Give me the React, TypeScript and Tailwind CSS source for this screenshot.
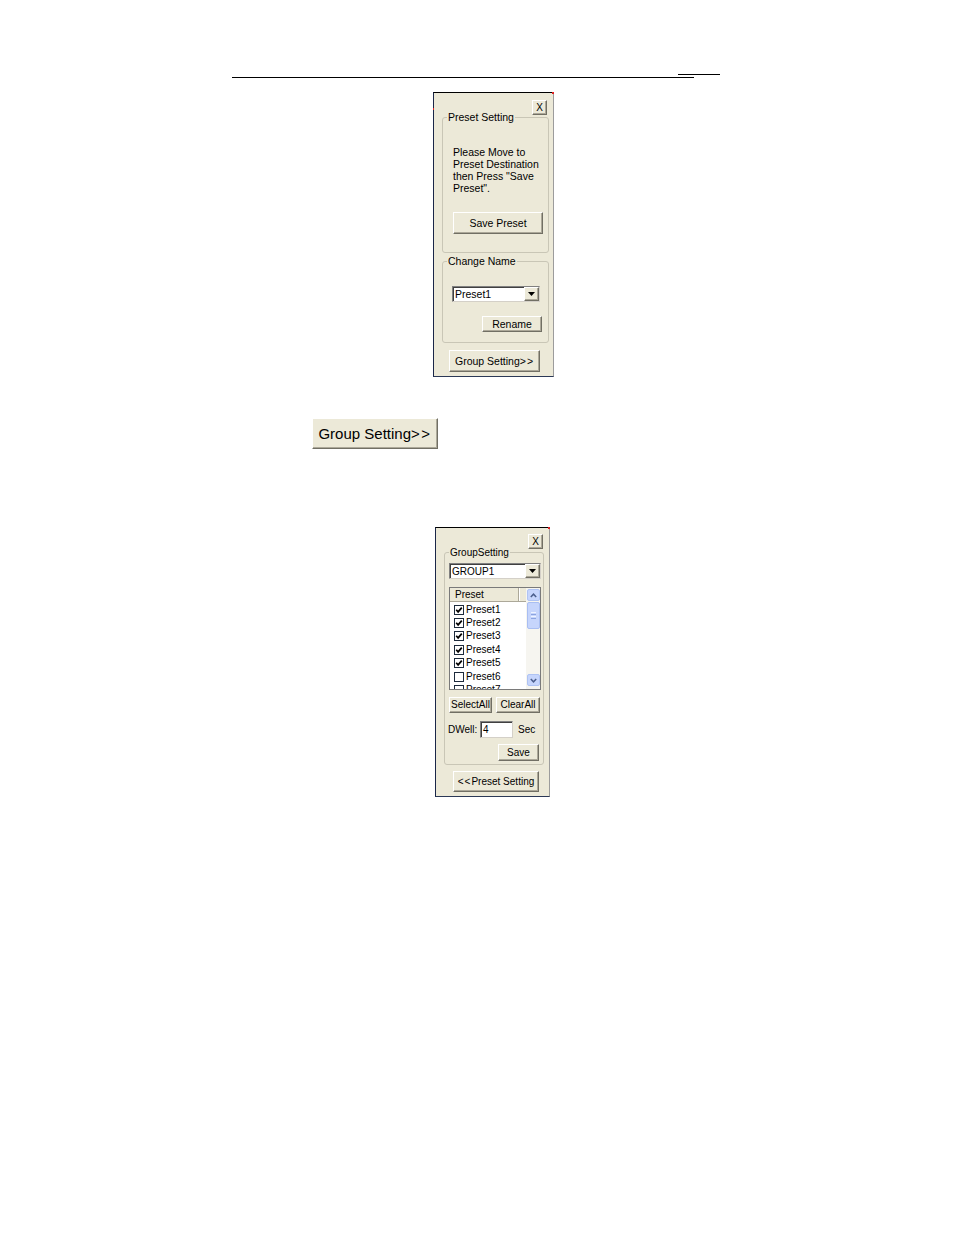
import React from "react";

const btn3d =
  "box-border shrink-0 flex items-center justify-center bg-[#ECE9D8] border border-t-white border-l-white border-r-[#716F64] border-b-[#716F64] shadow-[inset_-1px_-1px_0_#ACA899] text-black leading-none whitespace-nowrap";

function GroupBox({
  title,
  className,
  children,
}: {
  title: string;
  className: string;
  children: React.ReactNode;
}) {
  return (
    <div className={`relative box-border shrink-0 border border-[#C9C6B6] rounded-[3px] ${className}`}>
      <span className="absolute -top-[7px] left-[4px] px-[1px] bg-[#ECE9D8] leading-[13px] whitespace-nowrap text-black">
        {title}
      </span>
      {children}
    </div>
  );
}

function Combo({ value, className }: { value: string; className: string }) {
  return (
    <div
      className={`box-border shrink-0 flex bg-white border border-t-[#808080] border-l-[#808080] border-r-[#D4D0C8] border-b-[#D4D0C8] shadow-[inset_1px_1px_0_#404040] ${className}`}
    >
      <span className="flex-1 pl-[2px] pt-[1px] leading-[13px] whitespace-nowrap text-black">{value}</span>
      <div className={`${btn3d} w-[15px] h-[14px] mt-0`}>
        <svg width="7" height="4" viewBox="0 0 7 4">
          <path d="M0 0h7L3.5 4z" fill="#000" />
        </svg>
      </div>
    </div>
  );
}

function Check({ checked }: { checked: boolean }) {
  return (
    <div className="box-border w-[10px] h-[10px] border border-[#1c2a3c] bg-white flex items-center justify-center shrink-0">
      {checked && (
        <svg width="8" height="8" viewBox="0 0 8 8">
          <path d="M1.2 3.8 L3.1 5.9 L6.8 1.6" stroke="#000" strokeWidth="1.7" fill="none" />
        </svg>
      )}
    </div>
  );
}

function ScrollBtn({ dir }: { dir: "up" | "down" }) {
  return (
    <div className="box-border w-[13px] h-[12px] rounded-[2px] bg-[#C6D5FC] border border-[#AFC3F3] flex items-center justify-center shrink-0">
      <svg width="7" height="5" viewBox="0 0 7 5">
        {dir === "up" ? (
          <path d="M0.8 4 L3.5 1.2 L6.2 4" stroke="#4B5E8C" strokeWidth="1.5" fill="none" />
        ) : (
          <path d="M0.8 1 L3.5 3.8 L6.2 1" stroke="#4B5E8C" strokeWidth="1.5" fill="none" />
        )}
      </svg>
    </div>
  );
}

function ListBox() {
  const rows = ["Preset1", "Preset2", "Preset3", "Preset4", "Preset5", "Preset6", "Preset7"];
  return (
    <div className="box-border shrink-0 mt-[8px] w-[92px] h-[103px] flex border border-[#7A7A7A] bg-white overflow-hidden">
      <div className="flex-1 min-w-0 flex flex-col">
        <div className="h-[14px] shrink-0 flex bg-[#ECE9D8] border-b border-[#ACA899]">
          <div className="w-[69px] pl-[5px] leading-[13px] border-r border-[#ACA899] text-black">Preset</div>
          <div className="flex-1 border-l border-white" />
        </div>
        <div className="pt-[1px]">
          {rows.map((r, i) => (
            <div key={r} className="h-[13.4px] flex items-center pl-[4px] gap-[2px]">
              <Check checked={i < 5} />
              <span className="leading-[12px] text-black whitespace-nowrap">{r}</span>
            </div>
          ))}
        </div>
      </div>
      <div className="w-[14px] shrink-0 flex flex-col items-center bg-[#F6F5F0]">
        <div className="mt-[1px]">
          <ScrollBtn dir="up" />
        </div>
        <div className="box-border mt-[1px] w-[13px] h-[27px] rounded-[2px] bg-[#C6D5FC] border border-[#A9BEF2] flex flex-col items-center justify-center gap-[1px]">
          <div className="w-[5px] h-px bg-[#EEF3FF]" />
          <div className="w-[5px] h-px bg-[#8CA4E0]" />
          <div className="w-[5px] h-px bg-[#EEF3FF]" />
          <div className="w-[5px] h-px bg-[#8CA4E0]" />
        </div>
        <div className="flex-1" />
        <div className="mb-[3px]">
          <ScrollBtn dir="down" />
        </div>
      </div>
    </div>
  );
}

export default function App() {
  return (
    <div className="w-[954px] min-h-[1235px] bg-white pt-[74px] font-['Liberation_Sans',Arial,sans-serif] text-black">
      <div className="ml-[678px] w-[42px] h-px bg-black" />
      <div className="ml-[232px] mt-[2px] w-[462px] h-px bg-black" />

      {/* Preset Setting dialog */}
      <div className="relative ml-[433px] mt-[14px] box-border w-[121px] h-[285px] flex flex-col bg-[#ECE9D8] border border-t-black border-l-[#1A2648] border-r-[#9C9C9C] border-b-[#2B3856] text-[10.5px]">
        <span className="absolute -top-[1px] -right-[1px] w-[2px] h-[2px] bg-[#E02020]" />
        <span className="absolute top-[15px] -left-[1px] w-px h-[2px] bg-[#E02020]" />
        <div className="flex justify-end pt-[7px] pr-[6px] shrink-0">
          <div className={`${btn3d} w-[15px] h-[15px] text-[10px]`}>X</div>
        </div>
        <GroupBox title="Preset Setting" className="ml-[8px] mt-[2px] w-[107px] h-[136px] pt-[28px] pl-[10px]">
          <div className="leading-[12px] whitespace-nowrap">
            Please Move to
            <br />
            Preset Destination
            <br />
            then Press "Save
            <br />
            Preset".
          </div>
          <div className={`${btn3d} mt-[18px] w-[90px] h-[22px]`}>Save Preset</div>
        </GroupBox>
        <GroupBox title="Change Name" className="ml-[8px] mt-[8px] w-[107px] h-[82px] pt-[24px] pl-[9px]">
          <Combo value="Preset1" className="w-[88px] h-[16px]" />
          <div className={`${btn3d} mt-[14px] ml-[30px] w-[60px] h-[16px]`}>Rename</div>
        </GroupBox>
        <div className={`${btn3d} ml-[15px] mt-[7px] w-[91px] h-[22px]`}>
          Group Setting<span className="tracking-[1px]">&gt;&gt;</span>
        </div>
      </div>

      {/* Standalone button */}
      <div className={`${btn3d} ml-[312px] mt-[41px] w-[126px] h-[31px] text-[15px]`}>
        Group Setting<span className="tracking-[1.5px]">&gt;&gt;</span>
      </div>

      {/* Group Setting dialog */}
      <div className="relative ml-[435px] mt-[78px] box-border w-[115px] h-[270px] flex flex-col bg-[#ECE9D8] border border-t-black border-l-[#1A2648] border-r-[#9C9C9C] border-b-[#2B3856] text-[10px]">
        <span className="absolute -top-[1px] -right-[1px] w-[2px] h-[2px] bg-[#E02020]" />
        <div className="flex justify-end pt-[6px] pr-[6px] shrink-0">
          <div className={`${btn3d} w-[15px] h-[15px] text-[10px]`}>X</div>
        </div>
        <GroupBox title="GroupSetting" className="ml-[8px] mt-[3px] w-[100px] h-[213px] pt-[10px] pl-[4px]">
          <Combo value="GROUP1" className="w-[92px] h-[16px]" />
          <ListBox />
          <div className="mt-[7px] flex gap-[4px]">
            <div className={`${btn3d} w-[43px] h-[16px]`}>SelectAll</div>
            <div className={`${btn3d} w-[44px] h-[16px]`}>ClearAll</div>
          </div>
          <div className="mt-[8px] h-[17px] flex items-center">
            <span className="-ml-[1px] w-[32px] whitespace-nowrap">DWell:</span>
            <div className="box-border w-[33px] h-[17px] bg-white border border-t-[#808080] border-l-[#808080] border-r-[#D4D0C8] border-b-[#D4D0C8] shadow-[inset_1px_1px_0_#404040] pl-[2px] leading-[15px]">
              4
            </div>
            <span className="ml-[5px]">Sec</span>
          </div>
          <div className={`${btn3d} mt-[6px] ml-[49px] w-[41px] h-[17px]`}>Save</div>
        </GroupBox>
        <div className={`${btn3d} ml-[17px] mt-[6px] w-[86px] h-[21px]`}>
          <span className="tracking-[1px]">&lt;&lt;</span>Preset Setting
        </div>
      </div>
    </div>
  );
}
